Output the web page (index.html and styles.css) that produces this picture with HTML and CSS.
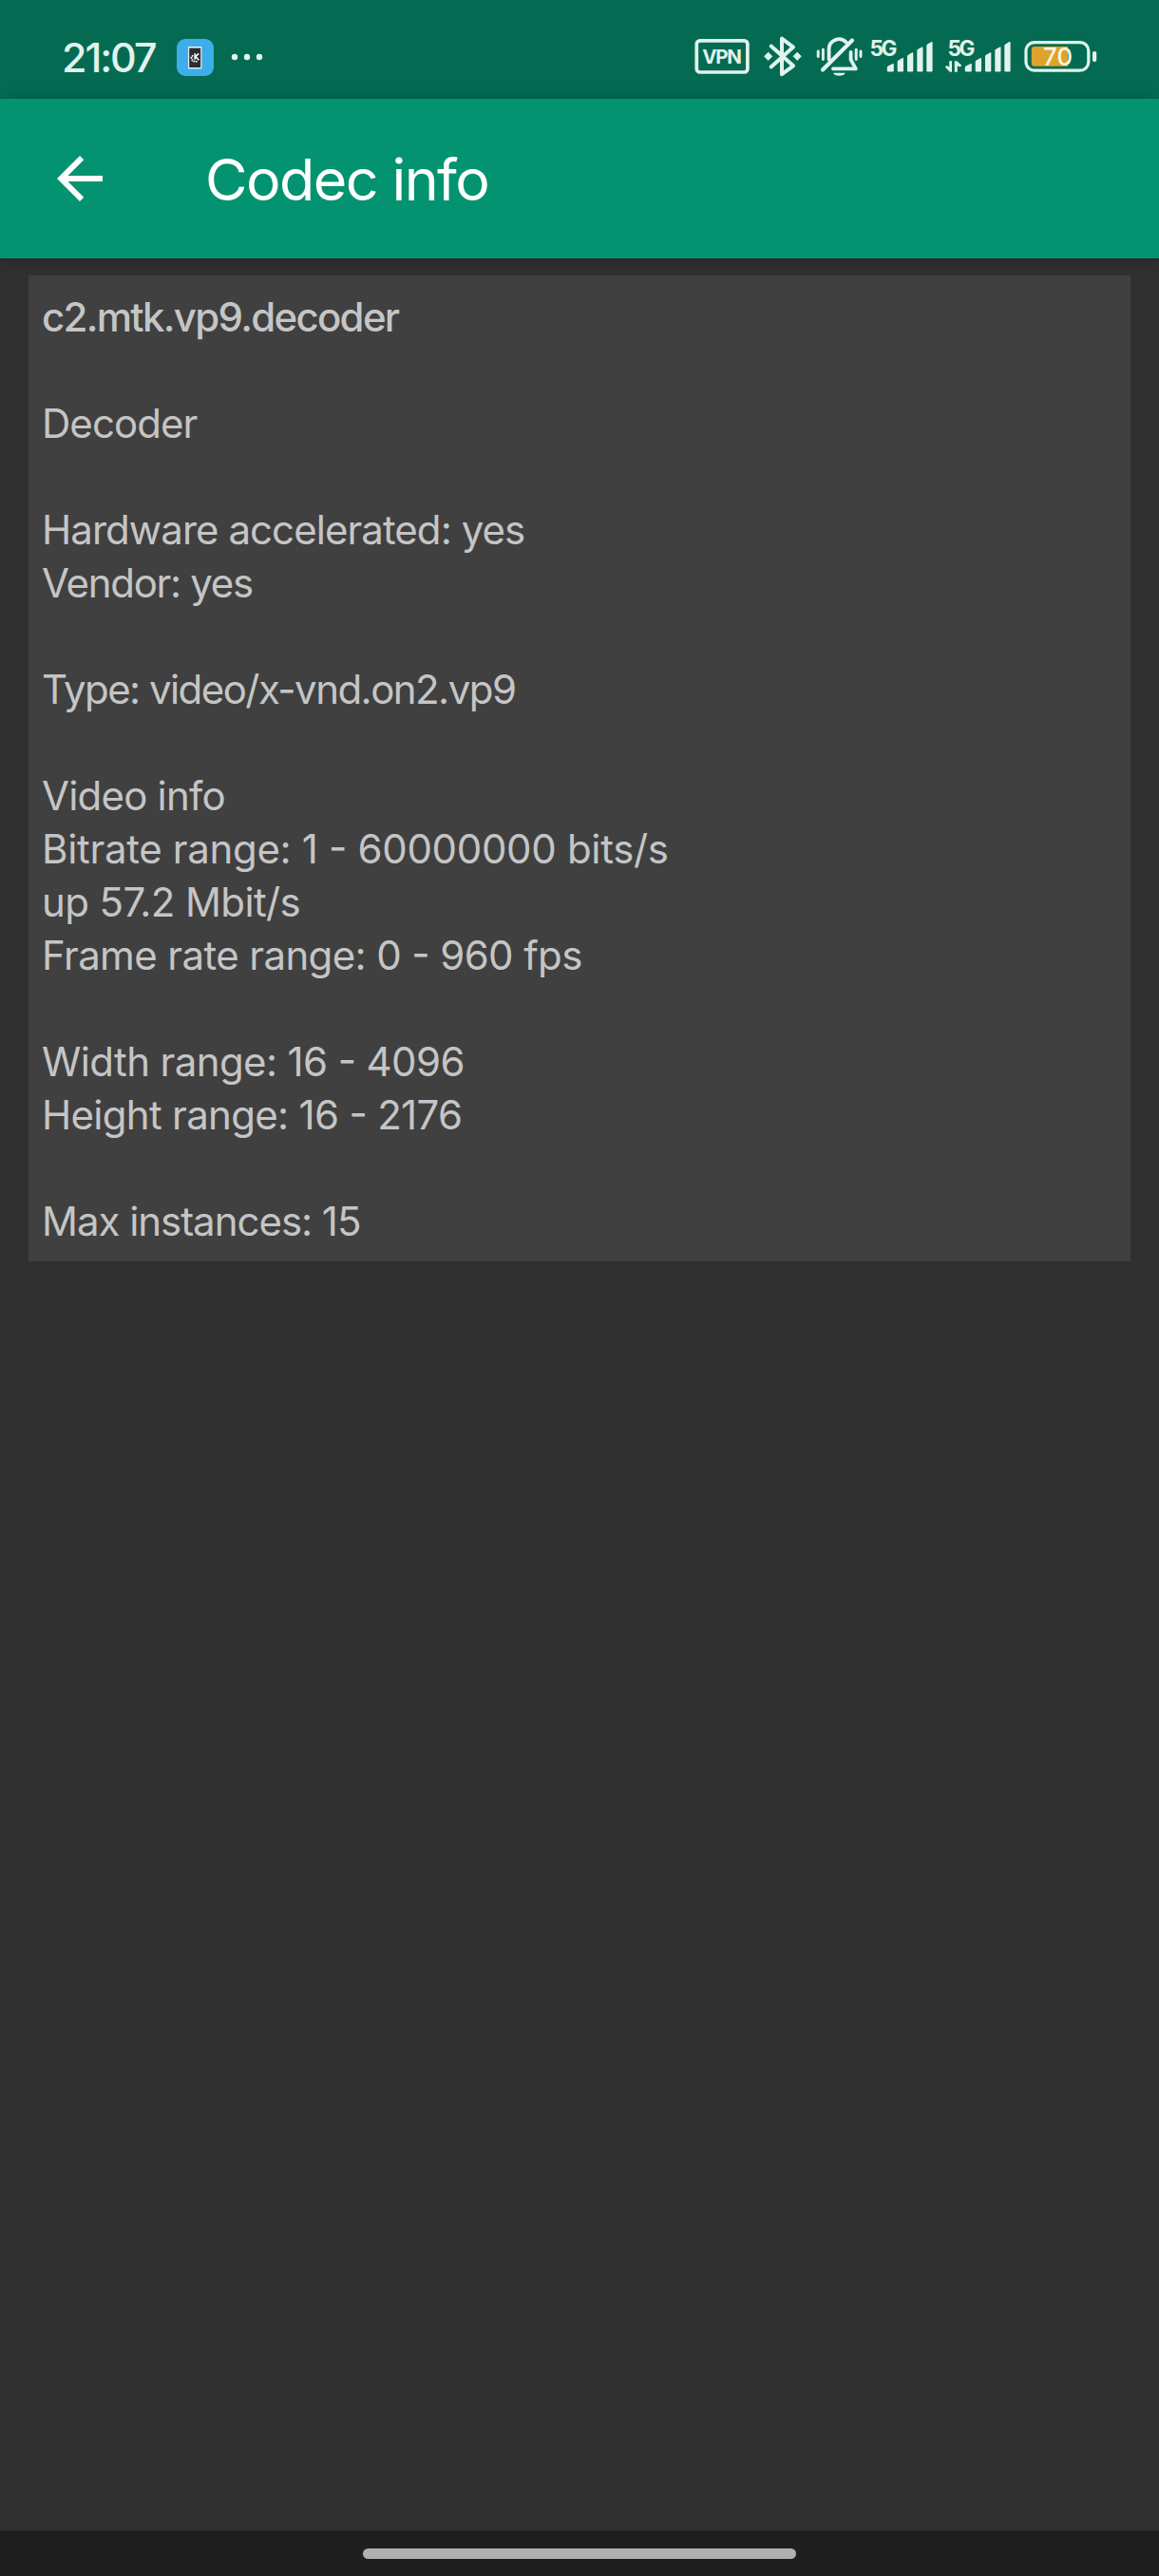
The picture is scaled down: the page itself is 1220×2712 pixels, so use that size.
FILE: index.html
```
<!DOCTYPE html>
<html lang="en">
<head>
<meta charset="utf-8">
<title>Codec info</title>
<link rel="stylesheet" href="styles.css">
</head>
<body>
<div class="screen">
  <div class="status">
    <div class="status-left">
      <span class="clock">21:07</span>
      <svg class="app-icon" width="39" height="39" viewBox="0 0 39 39">
        <rect width="39" height="39" rx="9" fill="#3daee9"/>
        <rect x="12" y="8" width="14.4" height="23.4" fill="#e8f0f2"/>
        <rect x="13.2" y="9.6" width="12" height="20.4" fill="#2b2d30"/>
        <path d="M17.2 17.2l-1.8 2.2 1.2 3.4 3 1.3 2.8-.9" fill="none" stroke="#fff" stroke-width="1.7" stroke-dasharray="1.7 .8"/>
        <path d="M19.2 15.2v6.6M23.2 15.4l-3.4 3.2 3.6 3.6" fill="none" stroke="#fff" stroke-width="1.6"/>
      </svg>
      <svg width="34" height="10" viewBox="0 0 34 10" fill="#e1f3ec">
        <circle cx="4" cy="5" r="3.2"/><circle cx="17" cy="5" r="3.2"/><circle cx="30" cy="5" r="3.2"/>
      </svg>
    </div>
    <div class="status-right">
      <svg width="70" height="44" viewBox="730 38 70 44">
        <rect x="733.3" y="42.8" width="53.6" height="33.2" rx="3.5" fill="none" stroke="#e1f3ec" stroke-width="3.7"/>
        <text class="vpn" x="739.3" y="67" textLength="41.5">VPN</text>
      </svg>
      <svg width="48" height="44" viewBox="800 38 48 44">
        <path d="M811.7 48.6L835 69.3 823 78.2V40.6L835 49.6 811.7 70.4" fill="none" stroke="#e1f3ec" stroke-width="4" stroke-linecap="round" stroke-linejoin="round"/>
        <path d="M808.7 55.2l4 4.1-4 4.1-4-4.1zM839.2 55.2l4 4.1-4 4.1-4-4.1z" fill="#e1f3ec" stroke="#e1f3ec" stroke-linejoin="round"/>
      </svg>
      <svg width="66" height="44" viewBox="848 38 66 44">
        <g fill="none" stroke="#e1f3ec" stroke-linecap="round" stroke-linejoin="round">
          <path d="M866 73.6L897 42.4" stroke-width="4.2"/>
          <path d="M872.6 62.500V52.500a10.600 10.600 0 0 1 18-8.200M895.600 55V62.800L900.800 72.400H877" stroke-width="3.800"/>
          <path d="M861.200 54v5.600M866.400 52.200v10.400M901.200 52.200v10.400M906 54v5.600" stroke-width="2.900"/>
        </g>
        <path d="M877 76.800h12.800a6.600 4 0 0 1-12.800 0z" fill="#e1f3ec"/>
      </svg>
      <svg width="76" height="44" viewBox="914 38 76 44" fill="#e1f3ec">
        <text class="net" x="915.5" y="58.6" textLength="29">5G</text>
        <path d="M933.8 74.6v-3.4q0-1 1-1.6l5-2.6q1-.4 1 .8v6.8q0 1-1 1h-5q-1 0-1-1zM944.7 74.6V65q0-1 1-1.6l4.3-2.4q1-.4 1 .8v12.8q0 1-1 1h-4.300q-1 0-1-1zM955 74.600V59.300q0-1 1-1.600l4.300-2.400q1-.4 1 .8v18.500q0 1-1 1H956q-1 0-1-1zM965.300 74.600V53.400q0-1 1-1.600l4.200-2.400q1-.4 1 .8v24.400q0 1-1 1h-4.200q-1 0-1-1zM975.300 74.600V48q0-1 1-1.600l4.300-2.400q1-.4 1 .8v29.800q0 1-1 1h-4.300q-1 0-1-1z"/>
      </svg>
      <svg width="82" height="44" viewBox="990 38 82 44" fill="#e1f3ec">
        <text class="net" x="997.5" y="58.6" textLength="29">5G</text>
        <path d="M999.2 64.200h2.800v11.500h-2.200L995 70.800l1.400-1.800 2.800 1.600zM1004.800 64.200h2.400l5 4.600-1.400 1.800-3-1.400v6.500h-3z"/>
        <path transform="translate(82 0)" d="M933.8 74.6v-3.4q0-1 1-1.6l5-2.6q1-.4 1 .8v6.8q0 1-1 1h-5q-1 0-1-1zM944.7 74.6V65q0-1 1-1.6l4.3-2.4q1-.4 1 .8v12.8q0 1-1 1h-4.300q-1 0-1-1zM955 74.600V59.300q0-1 1-1.600l4.300-2.400q1-.4 1 .8v18.500q0 1-1 1H956q-1 0-1-1zM965.300 74.600V53.400q0-1 1-1.600l4.200-2.400q1-.4 1 .8v24.400q0 1-1 1h-4.200q-1 0-1-1zM975.300 74.600V48q0-1 1-1.600l4.300-2.400q1-.4 1 .8v29.800q0 1-1 1h-4.300q-1 0-1-1z"/>
      </svg>
      <svg width="84" height="44" viewBox="1072 38 84 44">
        <rect x="1080" y="44.600" width="65.800" height="29.600" rx="9" fill="none" stroke="#e1f3ec" stroke-width="3.200"/>
        <path d="M1089 49h35v20.800h-35q-3.200 0-3.200-3.200v-14.400q0-3.200 3.200-3.200z" fill="#dfa32c"/>
        <rect x="1150" y="54" width="4.200" height="11.200" rx="2.100" fill="#e1f3ec"/>
        <text class="level" x="1098" y="69.200" textLength="31">70</text>
      </svg>
    </div>
  </div>
  <header class="appbar">
    <svg class="back" width="72" height="72" viewBox="0 0 24 24" fill="#fff"><path d="M20 11H7.830l5.590-5.590L12 4l-8 8 8 8 1.410-1.410L7.830 13H20v-2z"/></svg>
    <h1 class="title">Codec info</h1>
  </header>
  <main class="content">
    <section class="card">
      <p class="line name">c2.mtk.vp9.decoder</p>
      <p class="line gap t9">Decoder</p>
      <p class="line gap t9">Hardware accelerated: yes</p>
      <p class="line t13">Vendor: yes</p>
      <p class="line gap t15">Type: video/x-vnd.on2.vp9</p>
      <p class="line gap t8">Video info</p>
      <p class="line t3">Bitrate range: 1 <span class="dash">-</span> 60000000 bits/s</p>
      <p class="line t6">up 57.2 Mbit/s</p>
      <p class="line t6">Frame rate range: 0 <span class="dash">-</span> 960 fps</p>
      <p class="line gap t6">Width range: 16 <span class="dash">-</span> 4096</p>
      <p class="line t7">Height range: 16 <span class="dash">-</span> 2176</p>
      <p class="line gap t10">Max instances: 15</p>
    </section>
  </main>
  <div class="navbar"><div class="pill"></div></div>
</div>
</body>
</html>
```
FILE: styles.css
```
* { box-sizing: border-box; }
body {
  margin: 0;
  background: #303030;
  font-family: Inter, Roboto, "Liberation Sans", sans-serif;
}
svg { display: block; flex: none; }
.screen {
  width: 1220px;
  height: 2712px;
  display: flex;
  flex-direction: column;
}
.status {
  height: 104px;
  background: #046b52;
  display: flex;
  justify-content: space-between;
  align-items: center;
  padding: 16px 64px 0 65px;
}
.status-left { display: flex; align-items: center; height: 44px; }
.clock {
  width: 121px;
  font-size: 43px;
  font-weight: 500;
  line-height: 44px;
  letter-spacing: -2.1px;
  color: #e1f3ec;
}
.app-icon { margin-right: 18px; }
.status-right { display: flex; }
.vpn { font-size: 20.5px; font-weight: 700; fill: #e1f3ec; }
.net { font-size: 22.5px; font-weight: 700; fill: #e1f3ec; }
.level { font-size: 25.5px; font-weight: 500; fill: #fff6e2; }
.appbar {
  height: 168px;
  background: #049370;
  display: flex;
  align-items: center;
  padding-left: 48px;
  box-shadow: 0 2px 12px rgba(0, 0, 0, .25);
}
.title {
  margin: 1px 0 0 96px;
  font-size: 61px;
  font-weight: 400;
  letter-spacing: -1.6px;
  line-height: 80px;
  color: #fff;
}
.content { flex: 1; padding: 18px 30px; }
.card { background: #404040; padding: 16px 15px 14px 14px; }
.line {
  margin: 0;
  font-size: 42px;
  font-weight: 400;
  line-height: 56px;
  color: #c5c5c5;
  white-space: pre;
}
.gap { margin-top: 56px; }
.name { font-weight: 500; letter-spacing: -1.7px; }
.t3 { letter-spacing: -.33px; }
.t6 { letter-spacing: -.62px; }
.t7 { letter-spacing: -.7px; }
.t8 { letter-spacing: -.79px; }
.t9 { letter-spacing: -.95px; }
.t10 { letter-spacing: -1.03px; }
.t13 { letter-spacing: -1.3px; }
.t15 { letter-spacing: -1.55px; }
.dash { font-feature-settings: "case"; }
.navbar {
  height: 48px;
  background: #1f1f1f;
  display: flex;
  justify-content: center;
  padding-top: 19px;
}
.pill { width: 456px; height: 11px; border-radius: 5.5px; background: #b0b0b0; }
```
